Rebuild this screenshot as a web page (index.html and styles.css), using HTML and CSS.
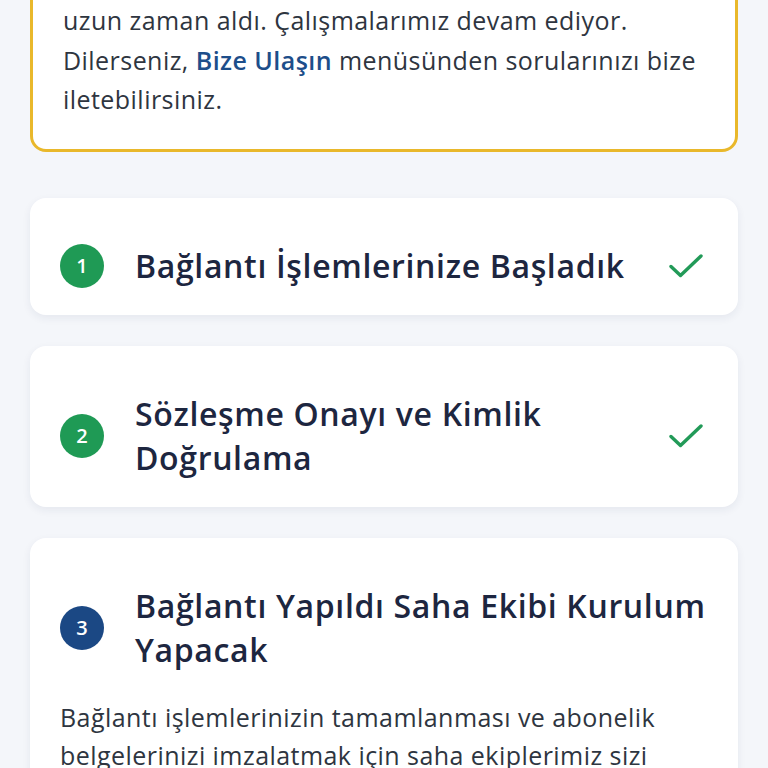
FILE: index.html
```html
<!DOCTYPE html>
<html lang="tr">
<head>
  <meta charset="UTF-8" />
  <meta name="viewport" content="width=device-width, initial-scale=1.0"/>
  <title>Bağlantı Durumu</title>
  <link rel="stylesheet" href="styles.css">
</head>
<body>
  <div class="page">
    <div class="notice">
      <p>uzun zaman aldı. Çalışmalarımız devam ediyor. Dilerseniz, <a href="#">Bize Ulaşın</a> menüsünden sorularınızı bize iletebilirsiniz.</p>
    </div>

    <div class="step">
      <div class="step-head">
        <span class="step-num done">1</span>
        <h2 class="step-title">Bağlantı İşlemlerinize Başladık</h2>
        <svg class="check" viewBox="0 0 34 24" width="34" height="24"><path d="M2 12.5 L11.5 21.5 L32 2" fill="none" stroke="#229a58" stroke-width="3.4" stroke-linecap="round" stroke-linejoin="round"/></svg>
      </div>
    </div>

    <div class="step">
      <div class="step-head">
        <span class="step-num done">2</span>
        <h2 class="step-title">Sözleşme Onayı ve Kimlik Doğrulama</h2>
        <svg class="check" viewBox="0 0 34 24" width="34" height="24"><path d="M2 12.5 L11.5 21.5 L32 2" fill="none" stroke="#229a58" stroke-width="3.4" stroke-linecap="round" stroke-linejoin="round"/></svg>
      </div>
    </div>

    <div class="step">
      <div class="step-head">
        <span class="step-num active">3</span>
        <h2 class="step-title">Bağlantı Yapıldı Saha Ekibi Kurulum Yapacak</h2>
      </div>
      <p class="step-text">Bağlantı işlemlerinizin tamamlanması ve abonelik belgelerinizi imzalatmak için saha ekiplerimiz sizi arayarak randevu oluşturacaktır.</p>
    </div>
  </div>
</body>
</html>
```

FILE: styles.css
```css
* { box-sizing: border-box; }
body {
  margin: 0;
  background: #f4f6fa;
  font-family: 'Open Sans', 'Noto Sans', sans-serif;
  color: #2e3540;
  overflow: hidden;
}
.page {
  padding: 0 30px 40px;
  display: flex;
  flex-direction: column;
  gap: 31px;
}
.notice {
  margin-top: -29px;
  margin-bottom: 15px;
  background: #ffffff;
  border: 3px solid #e9b82b;
  border-radius: 16px;
  padding: 27px 30px 29px;
}
.notice p {
  margin: 0;
  font-size: 25px;
  letter-spacing: 0.45px;
  line-height: 39.5px;
}
.notice a {
  color: #1d4e8a;
  font-weight: 600;
  text-decoration: none;
}
.step {
  background: #ffffff;
  border-radius: 16px;
  box-shadow: 0 3px 8px rgba(30, 45, 80, 0.07);
  padding: 46px 24px 27px 30px;
}
.step-head {
  display: flex;
  align-items: center;
}
.step-num {
  flex: none;
  width: 44px;
  height: 44px;
  border-radius: 50%;
  display: flex;
  align-items: center;
  justify-content: center;
  color: #ffffff;
  font-size: 20px;
  font-weight: 600;
  margin-right: 31px;
}
.step-num.done { background: #1f9a55; }
.step-num.active { background: #1b4884; }
.step-title {
  flex: 1;
  margin: 0;
  font-size: 32px;
  font-weight: 600;
  letter-spacing: 0.65px;
  line-height: 44px;
  color: #1d2640;
}
.check {
  flex: none;
  margin: 0 11px 0 20px;
}
.step-text {
  margin: 26px 0 0;
  font-size: 25px;
  letter-spacing: 0.45px;
  line-height: 38.5px;
  color: #2e3540;
}
```
